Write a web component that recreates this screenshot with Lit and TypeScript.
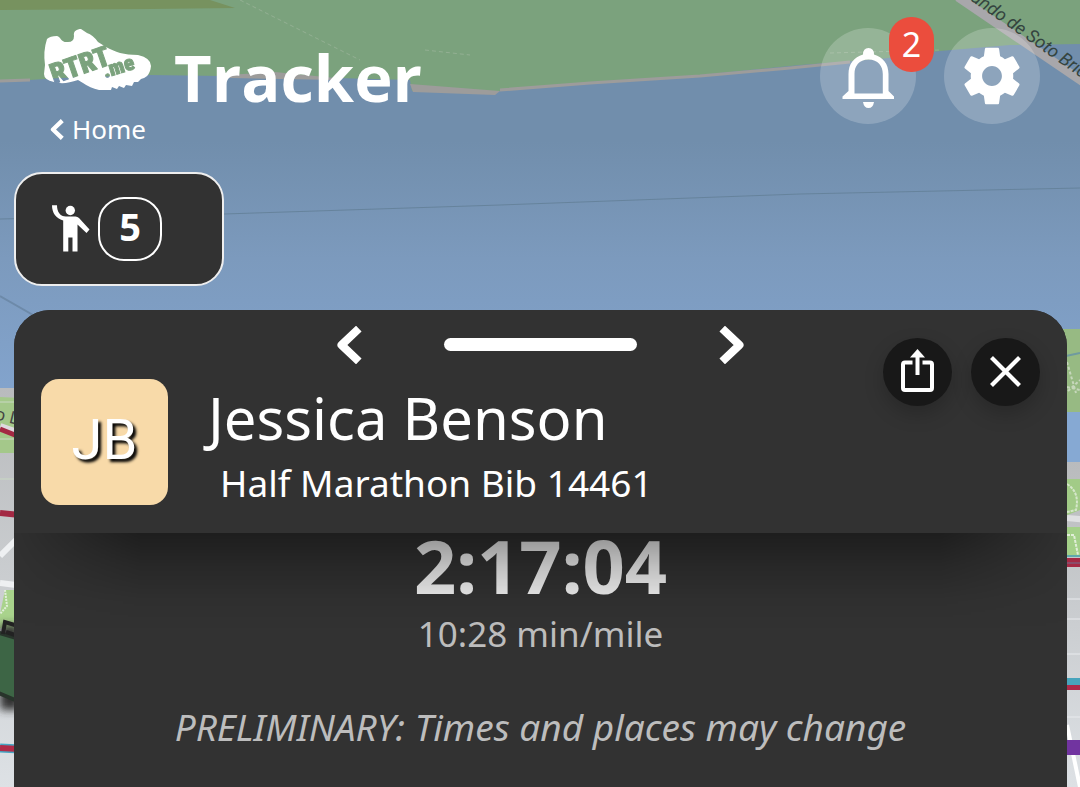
import { LitElement, html, css, svg } from "lit";
import { customElement, property } from "lit/decorators.js";

const GEAR =
  "M19.43 12.98c.04-.32.07-.64.07-.98s-.03-.66-.07-.98l2.11-1.65c.19-.15.24-.42.12-.64l-2-3.46c-.12-.22-.39-.3-.61-.22l-2.49 1c-.52-.4-1.08-.73-1.69-.98l-.38-2.65C14.46 2.18 14.25 2 14 2h-4c-.25 0-.46.18-.49.42l-.38 2.65c-.61.25-1.17.59-1.69.98l-2.49-1c-.23-.09-.49 0-.61.22l-2 3.46c-.13.22-.07.49.12.64l2.11 1.65c-.04.32-.07.65-.07.98s.03.66.07.98l-2.11 1.65c-.19.15-.24.42-.12.64l2 3.46c.12.22.39.3.61.22l2.49-1c.52.4 1.08.73 1.69.98l.38 2.65c.03.24.24.42.49.42h4c.25 0 .46-.18.49-.42l.38-2.65c.61-.25 1.17-.59 1.69-.98l2.49 1c.23.09.49 0 .61-.22l2-3.46c.12-.22.07-.49-.12-.64l-2.11-1.65zM12 15.5c-1.93 0-3.5-1.57-3.5-3.5s1.57-3.5 3.5-3.5 3.5 1.57 3.5 3.5-1.57 3.5-3.5 3.5z";

/** Street map behind the interface. */
@customElement("map-backdrop")
export class MapBackdrop extends LitElement {
  static styles = css`
    :host { display: block; }
    .map { display: block; width: 100%; height: 100%; }
    .street { font: italic 18px Roboto, sans-serif; fill: #34443f; }
    .small { font: 17px "Noto Sans", sans-serif; fill: #444; }
  `;

  render() {
    return html`<svg class="map" viewBox="0 0 1080 787" preserveAspectRatio="xMidYMin slice" aria-hidden="true">
      <defs>
        <linearGradient id="water" x1="0" y1="0" x2="0" y2="1">
          <stop offset="0" stop-color="#718eac" />
          <stop offset=".3" stop-color="#718eac" />
          <stop offset=".55" stop-color="#7c9abd" />
          <stop offset="1" stop-color="#86a9d6" />
        </linearGradient>
        <linearGradient id="land" x1="0" y1="0" x2="0" y2="1">
          <stop offset="0" stop-color="#b9bbbd" />
          <stop offset="1" stop-color="#dde1e5" />
        </linearGradient>
        <filter id="soft" x="-50%" y="-50%" width="200%" height="200%"><feGaussianBlur stdDeviation="4" /></filter>
      </defs>
      <rect width="1080" height="470" fill="url(#water)" />
      <path d="M0 0H1080V44L1010 45 940 51 880 59 800 65 700 75 590 82 500 91 440 92 412 91 410 80 300 77 150 75 60 78 0 82Z" fill="#7ba27d" />
      <path d="M0 0H210L235 8 150 9 0 10Z" fill="#77925f" />
      <path d="M0 81 30 80M500 90 590 83 700 76 790 68 850 62" fill="none" stroke="#9d9c9b" stroke-width="3" />
      <path d="M225 75 275 72 335 78 335 80 230 78ZM410 84 500 91 495 95 413 92Z" fill="#9d9c9b" />
      <path d="M240 0 360 60M425 50 470 55M830 53 940 50" fill="none" stroke="#93b093" stroke-width="1" stroke-dasharray="4 3" />
      <path d="M0 219 224 214M224 214 500 205 800 194 1080 188" fill="none" stroke="#66839c" stroke-width="1" />
      <path d="M0 296 40 319" stroke="#6d8aa9" stroke-width="2" />
      <path d="M958 -3 1092 88" stroke="#a8a7ab" stroke-width="9" />
      <text class="street" transform="translate(970 0) rotate(35)">ando de Soto Bridge</text>
      ${svg`
      <g>
        <rect y="388" width="40" height="399" fill="url(#land)" />
        <path d="M0 397 40 399V453H0Z" fill="#a4c88a" />
        <path d="M0 402H40M0 439H40M0 479H40" stroke="#c9d8c3" />
        <path d="M0 427 20 434" stroke="#ded9df" stroke-width="8" />
        <path d="M0 429 20 437" stroke="#a32843" stroke-width="5" />
        <text class="small" transform="translate(-6 419) rotate(14)">o L</text>
        <path d="M0 513 20 515" stroke="#a32843" stroke-width="6" />
        <path d="M0 556 20 536M0 583 16 585" stroke="#eef0f2" stroke-width="6" />
        <path d="M5 590H20V635L0 628V614Z" fill="#a9d38c" />
        <path d="M5 590 7 606 0 614" stroke="#e2efda" stroke-width="2" stroke-dasharray="2 1" fill="none" />
        <path d="M0 625H20V710H0Z" fill="#333" filter="url(#soft)" />
        <path d="M-4 632 20 639V702L-4 692Z" fill="#3d6545" stroke="#28342b" stroke-width="4" />
        <path d="M3 634 5 622 18 626M6 632 18 636" fill="none" stroke="#222" stroke-width="4" />
        <path d="M0 748 20 749" stroke="#45a5c3" stroke-width="9" />
        <path d="M0 748 20 749" stroke="#b02b48" stroke-width="6" />
      </g>
      <g>
        <rect x="1050" y="462" width="40" height="325" fill="url(#land)" />
        <rect x="1050" y="329" width="40" height="83" fill="#97ba83" />
        <path d="M1050 354 1066 356 1080 353" fill="none" stroke="#6f9a9f" stroke-width="2" />
        <path d="M1067 362 1076 393M1067 387 1080 390M1068 391 1080 380" stroke="#c6d7bb" stroke-width="2" stroke-dasharray="3 2" />
        <rect x="1050" y="412" width="40" height="50" fill="#86a9d3" />
        <path d="M1060 479H1090V506L1060 518Z" fill="#a2cb87" />
        <path d="M1067 484Q1080 492 1076 510L1067 512" fill="none" stroke="#d6e7cb" stroke-width="2" stroke-dasharray="3 1" />
        <path d="M1067 518 1090 520" stroke="#dfe0e2" stroke-width="6" />
        <rect x="1060" y="527" width="30" height="28" fill="#a4d089" />
        <path d="M1067 535H1074L1078 555" fill="none" stroke="#e1eed8" stroke-width="2" stroke-dasharray="3 1" />
        <path d="M1060 556H1090" stroke="#5fa9ac" stroke-width="2" />
        <rect x="1060" y="558" width="30" height="9" fill="#a52944" />
        <path d="M1060 563H1090" stroke="#716f8d" />
        <path d="M1060 599H1090M1060 619H1090M1060 654H1090M1060 717H1090" stroke="#e9ebee" stroke-width="1" />
        <rect x="1060" y="678" width="30" height="7" fill="#47a4bc" />
        <rect x="1060" y="685" width="30" height="5" fill="#ad2a4a" />
        <path d="M1067 725 1080 787" stroke="#fff" stroke-width="4" />
        <rect x="1060" y="740" width="30" height="15" fill="#7134a0" />
      </g>`}
    </svg>`;
  }
}

@customElement("app-root")
export class AppRoot extends LitElement {
  @property() name = "Jessica Benson";
  @property() event = "Half Marathon Bib 14461";
  @property({ type: Number }) alerts = 2;
  @property({ type: Number }) tracked = 5;

  static styles = css`
    :host {
      display: flex;
      flex-direction: column;
      position: relative;
      min-height: 100vh;
      overflow: hidden;
      color: #fff;
      font-family: "Noto Sans", "Open Sans", sans-serif;
    }
    * { box-sizing: border-box; }
    button { border: 0; padding: 0; margin: 0; color: inherit; font: inherit; background: none; cursor: pointer; }
    svg { display: block; }
    .backdrop { position: absolute; inset: 0; z-index: -1; }
    .bar {
      display: flex;
      align-items: flex-start;
      height: 172px;
      padding: 28px 40px 0 42px;
    }
    .brand { display: flex; flex-direction: column; width: 132px; }
    .logo-text { font-family: "Liberation Sans Narrow", "Roboto Condensed", Roboto, sans-serif; font-weight: 900; }
    .home {
      display: flex;
      align-items: center;
      gap: 8px;
      margin-top: 20px;
      padding-left: 8px;
      color: inherit;
      text-decoration: none;
      font-size: 26px;
      line-height: 34px;
    }
    .title { flex: 1; margin: 0; font-family: "Open Sans", sans-serif; font-size: 65px; line-height: 98px; font-weight: 700; }
    .tools { display: flex; gap: 28px; }
    .tool {
      position: relative;
      display: grid;
      place-items: center;
      width: 96px;
      height: 96px;
      border-radius: 50%;
      background: rgba(255, 255, 255, 0.2);
    }
    .badge {
      position: absolute;
      top: -11px;
      right: -18px;
      width: 45px;
      height: 55px;
      border-radius: 22px;
      background: #eb4d3d;
      font-size: 34px;
      line-height: 55px;
    }
    .chip {
      align-self: flex-start;
      display: flex;
      align-items: center;
      gap: 8px;
      width: 210px;
      height: 114px;
      margin-left: 14px;
      padding: 0 36px;
      border: 2px solid #eee;
      border-radius: 28px;
      background: #323232;
    }
    .count {
      width: 64px;
      height: 64px;
      border: 2px solid #fff;
      border-radius: 26px;
      font-size: 38px;
      font-weight: 700;
      line-height: 54px;
    }
    .sheet {
      flex: 1;
      display: flex;
      flex-direction: column;
      margin: 24px 13px 0 14px;
      border-radius: 36px 36px 0 0;
      overflow: hidden;
      background: #323232;
    }
    .head {
      position: relative;
      display: grid;
      grid-template-columns: 157px 1fr 157px;
      grid-template-rows: 69px 154px;
      padding: 0 27px;
      background: #323232;
    }
    .head::after {
      content: "";
      position: absolute;
      z-index: 1;
      top: 100%;
      left: 0;
      right: 0;
      height: 96px;
      background: linear-gradient(rgba(0, 0, 0, 0.4), rgba(0, 0, 0, 0.2) 35%, rgba(0, 0, 0, 0.05) 70%, transparent);
      mask-image: linear-gradient(90deg, rgba(0, 0, 0, 0.1), #000 12%, #000 88%, rgba(0, 0, 0, 0.1));
      pointer-events: none;
    }
    .pager { grid-column: 2; display: flex; align-items: center; justify-content: center; gap: 82px; }
    .grip { width: 193px; height: 13px; border-radius: 7px; background: #fff; }
    .actions { grid-column: 3; grid-row: 1 / 3; display: flex; justify-content: space-between; margin-top: 28px; }
    .action {
      display: grid;
      place-items: center;
      width: 69px;
      height: 68px;
      border-radius: 50%;
      background: #181818;
      box-shadow: 0 8px 20px rgba(0, 0, 0, 0.2);
    }
    .avatar {
      grid-column: 1;
      grid-row: 2;
      width: 127px;
      height: 126px;
      border-radius: 18px;
      background: #f8daa9;
      font: 56px/122px Roboto, sans-serif;
      text-align: center;
      text-shadow: 3px 3px 3px #000;
    }
    .who { grid-column: 2 / 4; grid-row: 2; padding-left: 10px; }
    .name { margin: 0; font-size: 58px; line-height: 78px; font-weight: 400; }
    .race { margin: 0; padding-left: 12px; font-size: 37px; line-height: 52px; }
    .result { text-align: center; padding-bottom: 24px; }
    .result p { margin: 0; }
    .time { font-size: 74px; line-height: 66px; font-weight: 700; color: #f0f0f0; }
    .pace { font-size: 35px; line-height: 70px; color: #bdbdbd; }
    .result .note { margin-top: 34px; font-size: 37px; line-height: 48px; font-style: italic; color: #bdbdbd; }
  `;

  private chevron(flip: boolean, size: number) {
    return html`<svg width=${Math.round(size * 0.68)} height=${size} viewBox="0 0 26 38" fill="none" stroke="#fff" stroke-width="8" stroke-linejoin="round" aria-hidden="true">
      <path d=${flip ? "M3.2 2.6 20.500 19 3.2 35.4" : "M22.800 2.6 5.500 19 22.800 35.4"} />
    </svg>`;
  }

  render() {
    return html`
      <map-backdrop class="backdrop"></map-backdrop>
      <header class="bar">
        <div class="brand">
          <svg width="110" height="64" viewBox="0 0 110 64" role="img" aria-label="RTRT.me">
            <mask id="cut">
              <rect width="110" height="64" fill="#fff" />
              <g class="logo-text" fill="#000" stroke="#000">
                <text transform="translate(12 56) rotate(-19)" font-size="28" stroke-width="1">RTRT</text>
                <text transform="translate(63 50) rotate(-17)" font-size="21" stroke-width="1">.me</text>
              </g>
            </mask>
            <path mask="url(#cut)" fill="#fff" d="M5 11Q8 8 15 8C19 9 19 15 26 14Q32 14 32 8C31 3 35 1 39 1L45 5Q51 7 56 14L64 19C73 24 82 27 96 27Q109 30 109 38C108 48 103 50 99 51L96 54 92 54 90 58 84 57 82 60 77 58 75 61 70 59 69 62 57 62Q48 60 41 55L36 52Q22 57 12 54Q2 52 2 46L3 37Q1 23 5 11Z" />
          </svg>
          <a class="home" href="#home">${this.chevron(false, 21)}Home</a>
        </div>
        <h1 class="title">Tracker</h1>
        <nav class="tools">
          <button class="tool" aria-label="Notifications">
            <svg width="56" height="64" viewBox="840 44 56 64" fill="#fff" aria-hidden="true">
              <path d="M868.500 48Q874 48 874 54.500C883 57 888.500 64 888.500 74V91L894 96.500V99H842.500V96.500L848.500 91V74C848.500 64 854 57 863 54.500Q863 48 868.500 48ZM868.500 59.500C859 59.500 854.500 66 854.500 74V93.500H882.800V74C882.800 66 878 59.500 868.500 59.500Z" fill-rule="evenodd" />
              <path d="M863 102H874Q873 108 868.500 108T863 102Z" />
            </svg>
            <span class="badge">${this.alerts}</span>
          </button>
          <button class="tool" aria-label="Settings">
            <svg width="68" height="68" viewBox="0 0 24 24" fill="#fff" aria-hidden="true"><path d=${GEAR} /></svg>
          </button>
        </nav>
      </header>

      <button class="chip" aria-label="Tracked people">
        <svg width="38" height="48" viewBox="52 205 38 48" fill="#fff" aria-hidden="true">
          <circle cx="70.300" cy="210.500" r="4.700" />
          <path d="M52 205.300H57C57 212 60 216.500 66 216.500H75.500Q77.500 216.500 79 218L89.500 229.500 86.500 233 77.500 224.500V251.500H72.500V237.500H68.300V251.500H63.200V220.500C56 218.500 52 213 52 205.300Z" />
        </svg>
        <span class="count">${this.tracked}</span>
      </button>

      <main class="sheet">
        <section class="head">
          <div class="pager">
            <button aria-label="Previous">${this.chevron(false, 38)}</button>
            <div class="grip"></div>
            <button aria-label="Next">${this.chevron(true, 38)}</button>
          </div>
          <div class="actions">
            <button class="action" aria-label="Share">
              <svg width="36" height="48" viewBox="0 0 36 48" fill="none" stroke="#fff" stroke-width="4" aria-hidden="true">
                <path d="M12.500 14.500H5Q3 14.500 3 16.500V40Q3 42 5 42H30Q32 42 32 40V16.500Q32 14.500 30 14.500H22.500M17.500 27V6" />
                <path d="M17.500 1 25 9.500H10Z" fill="#fff" stroke="none" />
              </svg>
            </button>
            <button class="action" aria-label="Close">
              <svg width="32" height="32" viewBox="0 0 32 32" stroke="#fff" stroke-width="4.200" aria-hidden="true"><path d="M1.500 1.500 29.500 29.500M29.500 1.500 1.500 29.500" /></svg>
            </button>
          </div>
          <div class="avatar">JB</div>
          <div class="who">
            <h2 class="name">${this.name}</h2>
            <p class="race">${this.event}</p>
          </div>
        </section>
        <section class="result">
          <p class="time">2:17:04</p>
          <p class="pace">10:28 min/mile</p>
          <p class="note">PRELIMINARY: Times and places may change</p>
        </section>
      </main>
    `;
  }
}
